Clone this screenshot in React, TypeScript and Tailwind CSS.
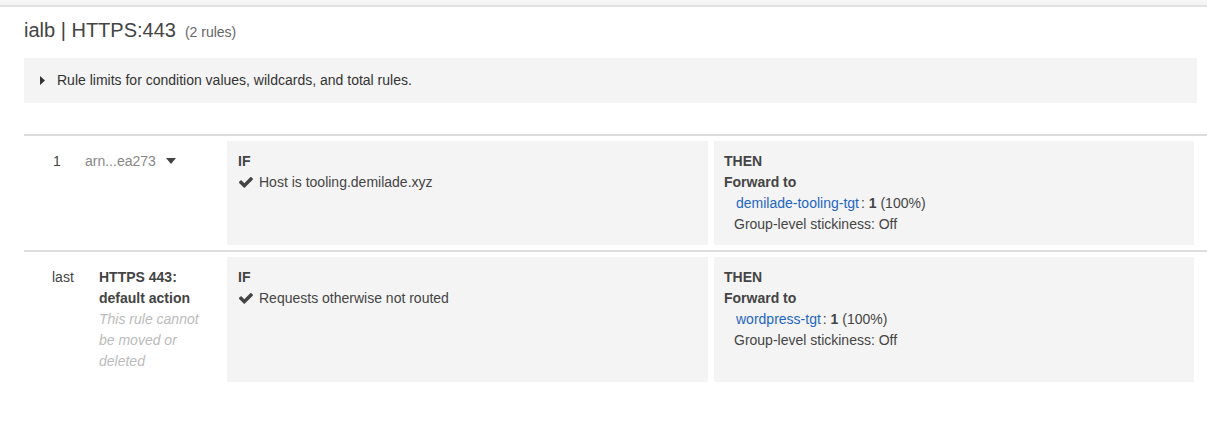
import React from "react";

type Rule = {
  num: string;
  condition: string;
  target: string;
};

function CaretDown() {
  return (
    <svg width="10" height="6" viewBox="0 0 10 6" className="inline-block">
      <path d="M0 0h10L5 6z" fill="#444" />
    </svg>
  );
}

function CaretRight() {
  return (
    <svg width="5" height="9" viewBox="0 0 5 9" className="inline-block">
      <path d="M0 0l5 4.5L0 9z" fill="#333" />
    </svg>
  );
}

// bold check, font-awesome 4 style
function Check() {
  return (
    <svg width="14" height="11" viewBox="130 400 1545 1095" className="shrink-0">
      <path
        d="M1671 566q0 40-28 68l-724 724-136 136q-28 28-68 28t-68-28l-136-136-362-362q-28-28-28-68t28-68l136-136q28-28 68-28t68 28l294 295 656-657q28-28 68-28t68 28l136 136q28 28 28 68z"
        fill="#444"
      />
    </svg>
  );
}

function IfCell({ condition }: { condition: string }) {
  return (
    <div className="w-[481px] bg-[#f4f4f4] py-[10px] pl-[11px] leading-[21px]">
      <div className="font-bold">IF</div>
      <div className="flex items-center">
        <span className="ml-[1px] mr-[6px] flex">
          <Check />
        </span>
        <span>{condition}</span>
      </div>
    </div>
  );
}

function ThenCell({ target }: { target: string }) {
  return (
    <div className="ml-[6px] w-[480px] bg-[#f4f4f4] py-[10px] pl-[10px] leading-[21px]">
      <div className="font-bold">THEN</div>
      <div className="font-bold">Forward to</div>
      <div className="pl-[12px]">
        <a className="text-[#1f66c2]">{target}</a>
        <span className="ml-[2px]">: </span>
        <span className="font-bold">1</span> (100%)
      </div>
      <div className="pl-[10px]">Group-level stickiness: Off</div>
    </div>
  );
}

const rule: Rule = { num: "1", condition: "Host is tooling.demilade.xyz", target: "demilade-tooling-tgt" };

export default function App() {
  return (
    <div className="min-h-screen bg-white font-['Liberation_Sans',Arial,sans-serif] text-[14px] text-[#444]">
      <div className="h-[5px] bg-[#f5f5f5] border-b-2 border-[#e1e1e1] box-content" />

      <div className="pl-6 pt-[11px]">
        <h2 className="text-[20px] leading-6 text-[#444]">
          ialb | HTTPS:443
          <span className="ml-[9px] text-[14px] text-[#666]">(2 rules)</span>
        </h2>

        <div className="mt-[14px] mr-[10px] h-[45px] bg-[#f4f4f4] flex items-center pl-4 text-[#333]">
          <CaretRight />
          <span className="ml-[12px]">Rule limits for condition values, wildcards, and total rules.</span>
        </div>

        <div className="mt-[31px]">
          {/* Rule 1 */}
          <div className="border-t-2 border-[#ddd] py-[5px] flex">
            <div className="w-[61px] pl-[29px] py-[10px] leading-[21px]">{rule.num}</div>
            <div className="w-[142px] py-[10px] leading-[21px] text-[#888] flex items-start">
              <span>arn...ea273</span>
              <span className="ml-[10px] mt-[7px] flex">
                <CaretDown />
              </span>
            </div>
            <IfCell condition={rule.condition} />
            <ThenCell target={rule.target} />
          </div>

          {/* Default rule */}
          <div className="border-t-2 border-[#ddd] py-[5px] flex">
            <div className="w-[61px] pl-[28px] py-[10px] leading-[21px]">last</div>
            <div className="w-[142px] pl-[14px] pr-[20px] py-[10px] leading-[21px]">
              <div className="font-bold">HTTPS 443: default action</div>
              <div className="italic text-[#bbb]">This rule cannot be moved or deleted</div>
            </div>
            <IfCell condition="Requests otherwise not routed" />
            <ThenCell target="wordpress-tgt" />
          </div>
        </div>
      </div>
    </div>
  );
}
